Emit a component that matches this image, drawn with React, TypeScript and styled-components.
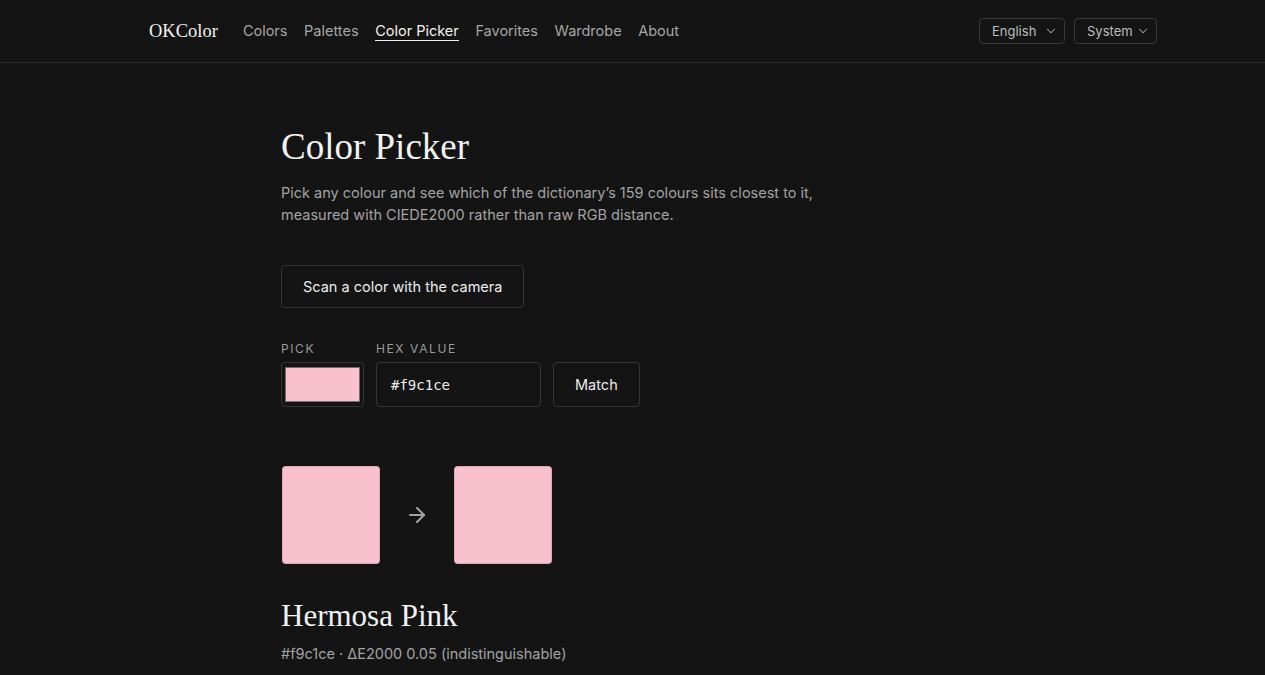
import styled, { createGlobalStyle } from "styled-components";

const GlobalStyle = createGlobalStyle`
  html, body {
    margin: 0;
    background: #141414;
    color: #ededed;
    font-family: Inter, "Noto Sans", sans-serif;
  }
`;

const Header = styled.header`
  height: 62px;
  border-bottom: 1px solid #2b2b2b;
`;

const HeaderInner = styled.div`
  height: 100%;
  display: flex;
  align-items: center;
  padding: 0 108px 0 149px;
`;

const Logo = styled.div`
  font-family: "Liberation Serif", serif;
  font-size: 18.5px;
  color: #f2f2f2;
  margin-right: 25px;
`;

const Nav = styled.nav`
  display: flex;
  gap: 16.6px;
`;

const NavLink = styled.a<{ $active?: boolean }>`
  font-size: 14.5px;
  color: ${(p) => (p.$active ? "#f2f2f2" : "#a6a6a6")};
  text-decoration: none;
  padding-bottom: 1px;
  border-bottom: 1px solid ${(p) => (p.$active ? "#f2f2f2" : "transparent")};
`;

const Controls = styled.div`
  margin-left: auto;
  display: flex;
  gap: 9px;
`;

const SelectBox = styled.div<{ $width: number }>`
  width: ${(p) => p.$width}px;
  height: 26px;
  box-sizing: border-box;
  border: 1px solid #383838;
  border-radius: 4px;
  display: flex;
  align-items: center;
  justify-content: space-between;
  padding: 0 6px 0 12px;
  font-size: 13px;
  color: #bdbdbd;
`;

const Main = styled.main`
  padding: 61px 0 0 281px;
`;

const Title = styled.h1`
  font-family: "Liberation Serif", serif;
  font-weight: 400;
  font-size: 37px;
  margin: 0;
  color: #f2f2f2;
  line-height: 46px;
`;

const Lead = styled.p`
  margin: 12px 0 0;
  font-size: 14.5px;
  line-height: 22px;
  color: #a3a3a3;
  max-width: 560px;
`;

const Button = styled.button`
  box-sizing: border-box;
  height: ${(p) => (p.type === "submit" ? 45 : 43)}px;
  padding: 0 21px;
  background: transparent;
  border: 1px solid #353535;
  border-radius: 4px;
  color: #ededed;
  font-family: Inter, "Noto Sans", sans-serif;
  font-size: 14.5px;
`;

const ScanRow = styled.div`
  margin-top: 39px;
`;

const PickRow = styled.div`
  margin-top: 34px;
  display: flex;
  align-items: flex-end;
  gap: 12px;
`;

const Field = styled.label`
  display: flex;
  flex-direction: column;
  gap: 6px;
`;

const FieldLabel = styled.span`
  font-size: 12px;
  letter-spacing: 1.6px;
  color: #9b9b9b;
  text-transform: uppercase;
  line-height: 14px;
`;

const PickWell = styled.div`
  box-sizing: border-box;
  width: 83px;
  height: 45px;
  border: 1px solid #353535;
  border-radius: 4px;
  padding: 4px 3px;
`;

const PickSwatch = styled.div<{ $color: string }>`
  height: 100%;
  background: ${(p) => p.$color};
  border: 1px solid #7a6a6e;
  box-sizing: border-box;
`;

const HexInput = styled.div`
  box-sizing: border-box;
  width: 165px;
  height: 45px;
  border: 1px solid #353535;
  border-radius: 4px;
  display: flex;
  align-items: center;
  padding-left: 14px;
  font-family: "DejaVu Sans Mono", "Liberation Mono", monospace;
  font-size: 14px;
  color: #ededed;
`;

const CompareRow = styled.div`
  margin-top: 59px;
  padding-left: 1px;
  display: flex;
  align-items: center;
`;

const Swatch = styled.div<{ $color: string }>`
  width: 98px;
  height: 98px;
  border-radius: 4px;
  background: ${(p) => p.$color};
  box-shadow: inset 0 0 0 1px rgba(0, 0, 0, 0.12);
`;

const Arrow = styled.div`
  width: 74px;
  display: flex;
  justify-content: center;
  color: #a3a3a3;
`;

const MatchName = styled.h2`
  font-family: "Liberation Serif", serif;
  font-weight: 400;
  font-size: 31px;
  line-height: 38px;
  margin: 33px 0 0;
  color: #f2f2f2;
`;

const MatchMeta = styled.div`
  margin-top: 10px;
  font-size: 14.5px;
  color: #a3a3a3;
`;

const Chevron = () => (
  <svg width="14" height="14" viewBox="0 0 24 24" fill="none" stroke="#a6a6a6" strokeWidth="1.8" strokeLinecap="round" strokeLinejoin="round">
    <path d="m6 9 6 6 6-6" />
  </svg>
);

const navItems = ["Colors", "Palettes", "Color Picker", "Favorites", "Wardrobe", "About"];
const picked = "#f9c1ce";

export default function App() {
  return (
    <>
      <GlobalStyle />
      <Header>
        <HeaderInner>
          <Logo>OKColor</Logo>
          <Nav>
            {navItems.map((item) => (
              <NavLink key={item} $active={item === "Color Picker"}>
                {item}
              </NavLink>
            ))}
          </Nav>
          <Controls>
            <SelectBox $width={86}>
              English <Chevron />
            </SelectBox>
            <SelectBox $width={83}>
              System <Chevron />
            </SelectBox>
          </Controls>
        </HeaderInner>
      </Header>
      <Main>
        <Title>Color Picker</Title>
        <Lead>
          Pick any colour and see which of the dictionary’s 159 colours sits closest to it, measured with CIEDE2000
          rather than raw RGB distance.
        </Lead>
        <ScanRow>
          <Button type="button">Scan a color with the camera</Button>
        </ScanRow>
        <PickRow>
          <Field>
            <FieldLabel>Pick</FieldLabel>
            <PickWell>
              <PickSwatch $color={picked} />
            </PickWell>
          </Field>
          <Field>
            <FieldLabel>Hex value</FieldLabel>
            <HexInput>{picked}</HexInput>
          </Field>
          <Button type="submit">Match</Button>
        </PickRow>
        <CompareRow>
          <Swatch $color={picked} />
          <Arrow>
            <svg width="24" height="24" viewBox="0 0 24 24" fill="none" stroke="currentColor" strokeWidth="2" strokeLinecap="round" strokeLinejoin="round">
              <path d="M5 12h14" />
              <path d="m12 5 7 7-7 7" />
            </svg>
          </Arrow>
          <Swatch $color={picked} />
        </CompareRow>
        <MatchName>Hermosa Pink</MatchName>
        <MatchMeta>#f9c1ce · ΔE2000 0.05 (indistinguishable)</MatchMeta>
      </Main>
    </>
  );
}
